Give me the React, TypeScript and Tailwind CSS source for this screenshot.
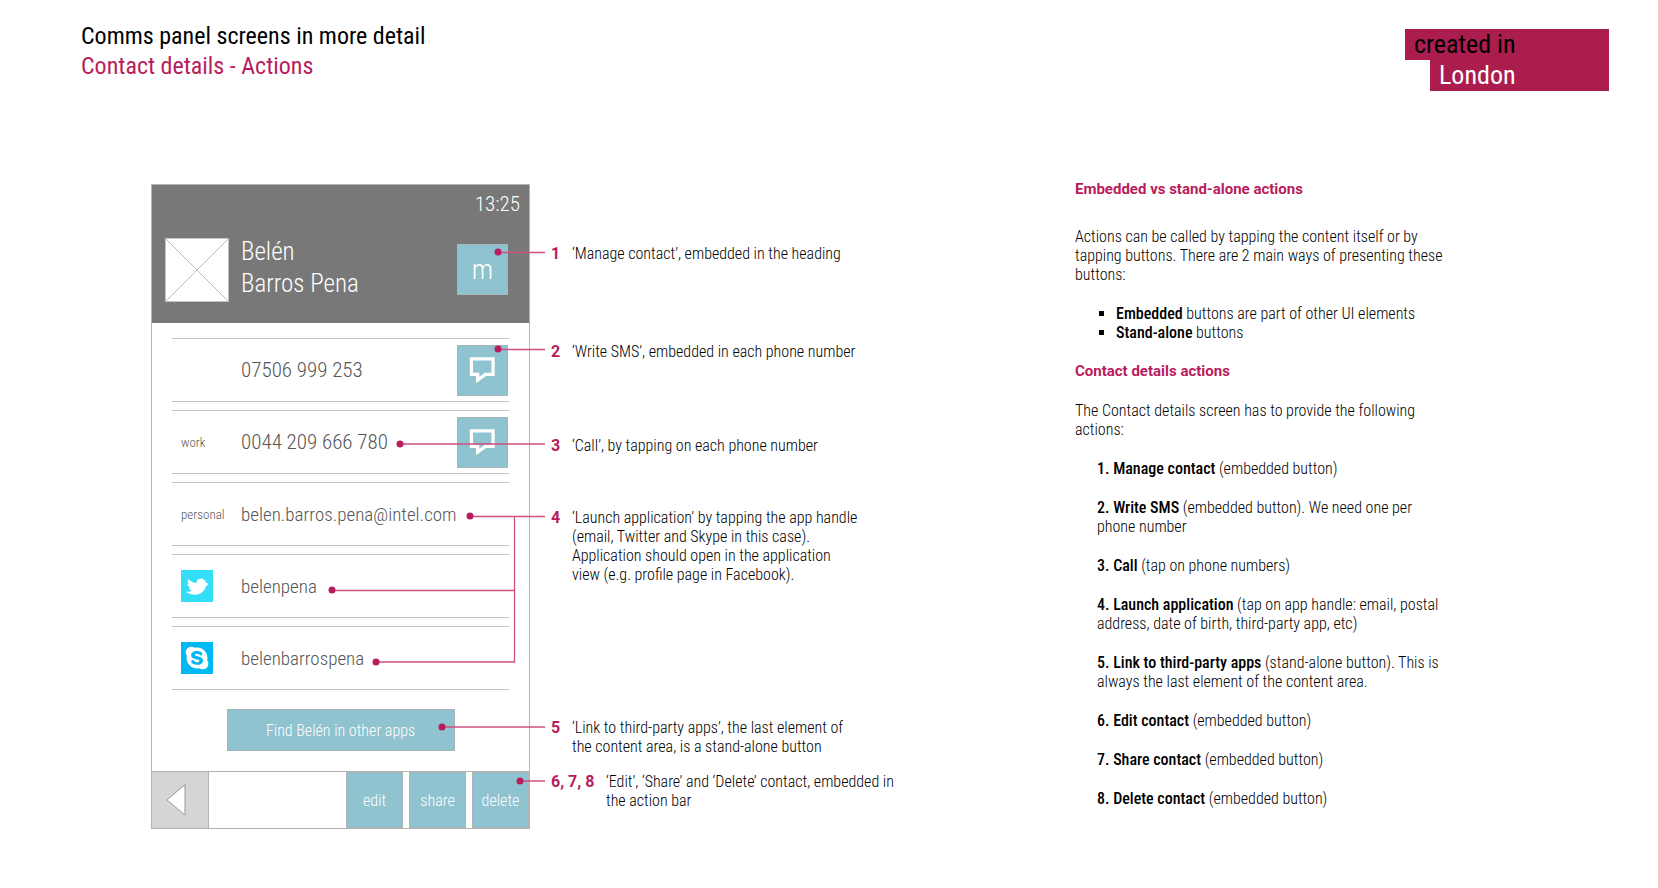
import type { ReactNode } from 'react';
import { FaSkype } from 'react-icons/fa';

const light = "font-['Roboto_Condensed','Roboto',sans-serif] font-light";
const strong = 'font-medium';
const tile = 'flex items-center justify-center border border-[#a9b4b8] bg-[#8fc3cf] text-white';

function Logo() {
  return (
    <div className="flex w-[204px] flex-col items-end bg-white text-[26px] leading-[31px] font-normal">
      <span className="w-full bg-[#aa1d4e] pl-[9px] text-black">created in</span>
      <span className="w-[179px] bg-[#aa1d4e] pl-[9px] text-white">London</span>
    </div>
  );
}

function SpeechIcon() {
  return (
    <svg viewBox="0 0 51 51" className="size-[49px]" fill="none" stroke="white" strokeWidth="3.4" aria-hidden="true">
      <path d="M14 13.500h22.500v16H28.500l-8 6V29.500h-6.500z" />
    </svg>
  );
}

function BirdIcon() {
  return (
    <span className="flex size-8 items-center justify-center bg-[#33dff7]">
      <svg viewBox="0 0 94 94" className="size-8" fill="white" aria-hidden="true">
        <path d="M14 63c7 2 13 1 18-3-5-1-8-4-9-8 2 .4 3 .3 5 0-6-2-9-6-9-12 2 1 3 1.500 5 1.500-4-4-6-9-3-15 7 7 14 11 24 12 1-6 4-11 10-14-.5 2-.5 3-.5 4 3-3 6-4 10-4-1 1-2 2-2 3 6 0 9 3 11 9l9 5c-3 0-5 .5-6 1 2 .5 3 1 4 2-3 0-6 1-7 3-4 14-15 25-32 25-10 0-19-3-27.500-9.500z" />
      </svg>
    </span>
  );
}

function SkypeIcon() {
  return (
    <span className="flex size-8 items-center justify-center bg-[#00b9f2] text-white">
      <FaSkype className="size-[26px]" aria-hidden="true" />
    </span>
  );
}

type Row = { lead?: ReactNode; text: string; href: string; sms?: boolean };

const rows: Row[] = [
  { text: '07506 999 253', href: 'tel:07506999253', sms: true },
  { lead: 'work', text: '0044 209 666 780', href: 'tel:0044209666780', sms: true },
  { lead: 'personal', text: 'belen.barros.pena@intel.com', href: 'mailto:belen.barros.pena@intel.com' },
  { lead: <BirdIcon />, text: 'belenpena', href: '#belenpena' },
  { lead: <SkypeIcon />, text: 'belenbarrospena', href: '#belenbarrospena' },
];

function ContactRow({ lead, text, href, sms }: Row) {
  return (
    <li className="flex h-16 items-center border-y border-[#c4c4c4] pr-px pl-[9px]">
      <span className="w-[60px] text-[13px] text-[#555]">{lead}</span>
      <a href={href} className={`${sms ? 'text-[21px]' : 'text-[19px]'} flex-1 text-[#555]`}>{text}</a>
      {sms && (
        <button type="button" aria-label="Write SMS" className={`${tile} size-[51px]`}>
          <SpeechIcon />
        </button>
      )}
    </li>
  );
}

const dots = [[346, 67], [346, 164], [248, 259], [318, 331], [180, 405], [224, 477], [290, 542], [368, 596]];

function Connectors() {
  return (
    <svg className="pointer-events-none absolute top-px left-px h-full w-[394px]" fill="none" stroke="#cf4f80" strokeWidth="1.3" aria-hidden="true">
      <path d="M346 67.500H393M346 164.500H393M248 259H393M318 331.500H393M180 405.500H362.500M224 477H362.500V331.500M290 542H393M368 596H393" />
      {dots.map(([x, y]) => (
        <circle key={y} cx={x} cy={y} r="3.500" fill="#b91c5c" stroke="none" />
      ))}
    </svg>
  );
}

function Phone() {
  return (
    <section className="relative">
      <div className="border border-[#b4b4b4] bg-white">
        <header className="bg-[#787878] px-[9px] pt-[7px] pb-5 text-white">
          <p className="text-right text-[21px] leading-6">13:25</p>
          <div className="mt-5 flex items-center pr-3 pl-1">
            <svg viewBox="0 0 64 64" className="size-16 border border-[#c4c4c4] bg-white" stroke="#bbb" aria-hidden="true">
              <path d="M0 0L64 64M64 0L0 64" />
            </svg>
            <h2 className="flex-1 pb-[3px] pl-3 text-[25px] leading-8">
              Belén
              <br />
              Barros Pena
            </h2>
            <button type="button" className={`${tile} size-[51px] text-[28px]`}>m</button>
          </div>
        </header>
        <ul className="flex flex-col gap-2 px-5 pt-[15px]">
          {rows.map((row) => (
            <ContactRow key={row.text} {...row} />
          ))}
        </ul>
        <button type="button" className={`${tile} mx-auto mt-[19px] mb-5 h-[42px] w-[228px]`}>
          Find Belén in other apps
        </button>
        <footer className="flex gap-1.5 border-t border-[#b4b4b4]">
          <button type="button" aria-label="Back" className="mr-auto flex h-14 w-[57px] items-center justify-center border-r border-[#b4b4b4] bg-[#d5d5d5]">
            <svg viewBox="0 0 20 34" className="mr-2 h-[34px] w-5" fill="white" stroke="#999" aria-hidden="true">
              <path d="M19 1.500V32L1 17z" />
            </svg>
          </button>
          <button type="button" className={`${tile} h-14 w-[57px]`}>edit</button>
          <button type="button" className={`${tile} h-14 w-[57px]`}>share</button>
          <button type="button" className={`${tile} h-14 w-[57px]`}>delete</button>
        </footer>
      </div>
      <Connectors />
    </section>
  );
}

function Note({ n, className, wide, children }: { n: string; className: string; wide?: boolean; children: ReactNode }) {
  return (
    <li className={`flex ${className}`}>
      <span className={`${wide ? 'w-[55px]' : 'w-[21px]'} shrink-0 font-['Roboto',sans-serif] font-bold text-[#b91c5c]`}>{n}</span>
      <span>{children}</span>
    </li>
  );
}

function Notes() {
  return (
    <ol className="pt-[60px] pl-[21px]">
      <Note n="1" className="">‘Manage contact’, embedded in the heading</Note>
      <Note n="2" className="mt-[79px]">‘Write SMS’, embedded in each phone number</Note>
      <Note n="3" className="mt-[75px]">‘Call’, by tapping on each phone number</Note>
      <Note n="4" className="mt-[53px]">
        ‘Launch application’ by tapping the app handle
        <br />
        (email, Twitter and Skype in this case).
        <br />
        Application should open in the application
        <br />
        view (e.g. profile page in Facebook).
      </Note>
      <Note n="5" className="mt-[134px]">
        ‘Link to third-party apps’, the last element of
        <br />
        the content area, is a stand-alone button
      </Note>
      <Note n="6, 7, 8" className="mt-4" wide>
        ‘Edit’, ‘Share’ and ‘Delete’ contact, embedded in
        <br />
        the action bar
      </Note>
    </ol>
  );
}

const actions: [string, ReactNode][] = [
  ['1. Manage contact', '(embedded button)'],
  ['2. Write SMS', <>(embedded button). We need one per<br />phone number</>],
  ['3. Call', '(tap on phone numbers)'],
  ['4. Launch application', <>(tap on app handle: email, postal<br />address, date of birth, third-party app, etc)</>],
  ['5. Link to third-party apps', <>(stand-alone button). This is<br />always the last element of the content area.</>],
  ['6. Edit contact', '(embedded button)'],
  ['7. Share contact', '(embedded button)'],
  ['8. Delete contact', '(embedded button)'],
];

const heading = "font-['Roboto',sans-serif] text-[15px] font-bold text-[#b91c5c]";

function Details() {
  return (
    <aside className="flex flex-col gap-5 whitespace-nowrap">
      <h2 className={`${heading} -mt-1 mb-2`}>Embedded vs stand-alone actions</h2>
      <p>
        Actions can be called by tapping the content itself or by
        <br />
        tapping buttons. There are 2 main ways of presenting these
        <br />
        buttons:
      </p>
      <ul className="list-[square] pl-[41px] marker:text-black">
        <li><b className={strong}>Embedded</b> buttons are part of other UI elements</li>
        <li><b className={strong}>Stand-alone</b> buttons</li>
      </ul>
      <h2 className={heading}>Contact details actions</h2>
      <p>
        The Contact details screen has to provide the following
        <br />
        actions:
      </p>
      <ol className="flex flex-col gap-5 pl-[22px]">
        {actions.map(([name, detail]) => (
          <li key={name}><b className={strong}>{name}</b> {detail}</li>
        ))}
      </ol>
    </aside>
  );
}

export default function App() {
  return (
    <div className={`${light} min-h-screen bg-white text-base leading-[19px] text-black`}>
      <header className="flex items-start justify-between pt-[21px] pr-[49px] pl-[81px]">
        <h1 className="text-2xl leading-[30px] font-normal">
          Comms panel screens in more detail
          <br />
          <span className="text-[#b91c5c]">Contact details - Actions</span>
        </h1>
        <div className="pt-2"><Logo /></div>
      </header>
      <main className="grid grid-cols-[379px_1fr_583px] items-start pt-[93px] pl-[151px]">
        <Phone />
        <Notes />
        <Details />
      </main>
    </div>
  );
}
